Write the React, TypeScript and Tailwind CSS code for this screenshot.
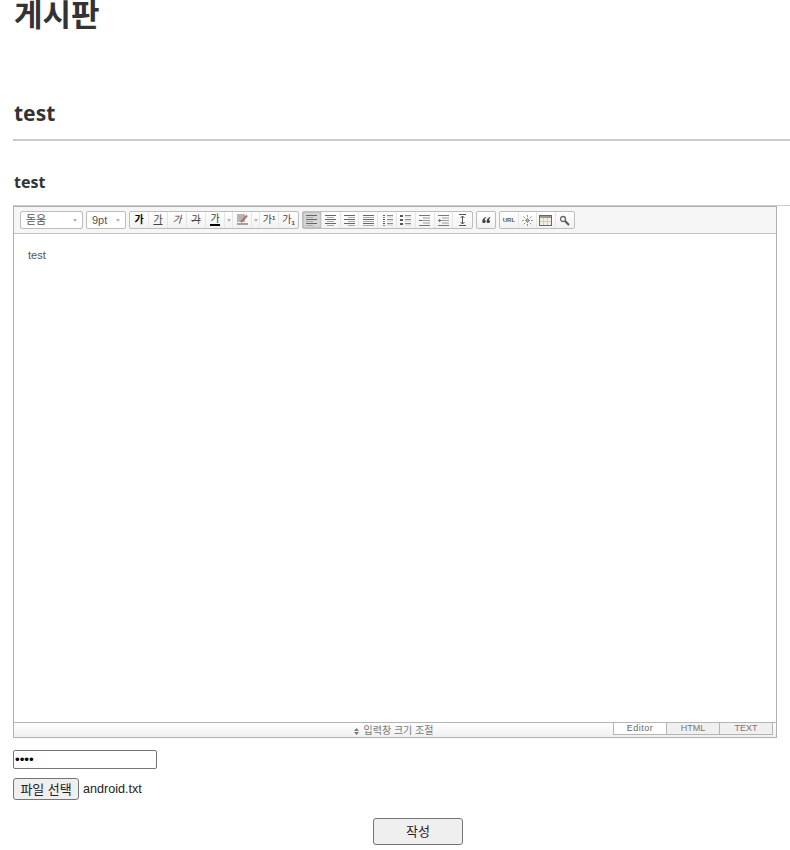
import React from "react";

const Btn = ({ children, active, w = 18.8 }: { children?: React.ReactNode; active?: boolean; w?: number }) => (
  <div
    style={{ width: w }}
    className={`h-full flex items-center justify-center border-r border-[#e6e6e6] last:border-r-0 ${active ? "bg-[#d6d6d6] shadow-[inset_0_0_2px_#888]" : ""}`}
  >
    {children}
  </div>
);

const Group = ({ children }: { children: React.ReactNode }) => (
  <div className="flex h-[18px] items-stretch rounded-[2px] border border-[#bdbdbd] bg-gradient-to-b from-white to-[#f2f2f2]">{children}</div>
);

const Ga = ({ className = "", children = "가" }: { className?: string; children?: React.ReactNode }) => (
  <span className={`text-[10px] leading-none text-[#444] ${className}`}>{children}</span>
);

const Arrow = () => (
  <div className="w-[8px] flex items-center justify-center border-r border-[#e6e6e6]">
    <div className="h-0 w-0 border-x-[2.5px] border-t-[3px] border-x-transparent border-t-[#b5b5b5]" />
  </div>
);

const Lines = ({ rows }: { rows: [number, number][] }) => (
  <svg width="13" height="11" viewBox="0 0 13 11">
    {rows.map(([x, w], i) => (
      <rect key={i} x={x} y={i * 2} width={w} height="1" fill={i % 2 ? "#aaa" : "#666"} />
    ))}
  </svg>
);

const ListIcon = ({ num }: { num?: boolean }) => (
  <svg width="13" height="11" viewBox="0 0 13 11">
    {[0, 4, 8].map((y) => (
      <g key={y}>
        <rect x={num ? 2 : 1} y={y} width={num ? 2 : 3} height={num ? 1 : 2} fill="#555" />
        {num && <rect x="2" y={y + 2} width="2" height="1" fill="#888" />}
        <rect x="6" y={y} width="6" height="1" fill="#888" />
        <rect x="6" y={y + 1.500} width="6" height="1" fill="#ccc" />
      </g>
    ))}
  </svg>
);

const Indent = ({ out }: { out?: boolean }) => (
  <svg width="13" height="11" viewBox="0 0 13 11">
    <rect x="1" y="0" width="11" height="1" fill="#777" />
    <rect x="5" y="2.500" width="7" height="1" fill="#999" />
    <rect x="5" y="5" width="7" height="1" fill="#999" />
    <rect x="5" y="7.500" width="7" height="1" fill="#999" />
    <rect x="1" y="10" width="11" height="1" fill="#777" />
    <path d={out ? "M1 5.500h3.500M2.750 3.750v3.500" : "M1 5.500h3.500"} stroke="#4a7a4a" strokeWidth="1" />
  </svg>
);

function Select({ label, w }: { label: string; w: number }) {
  return (
    <div
      style={{ width: w }}
      className="h-[18px] flex items-center justify-between rounded-[2px] border border-[#bdbdbd] bg-white pl-[5px] pr-[5px]"
    >
      <span className="text-[11px] leading-none text-[#555]">{label}</span>
      <div className="h-0 w-0 border-x-[2.5px] border-t-[3px] border-x-transparent border-t-[#b5b5b5]" />
    </div>
  );
}

export default function App() {
  return (
    <div className="w-[790px] h-[850px] overflow-hidden bg-white pl-[13px] text-[#333] font-['Noto_Sans','Noto_Sans_CJK_KR',sans-serif]">
      <h1 className="text-[31px] font-bold leading-[28px] h-[32px] pl-[1px]">게시판</h1>

      <div className="mt-[65px] border-b-2 border-[#ccc] h-[44px]">
        <h2 className="text-[21px] font-bold leading-[32px] pl-[1px]">test</h2>
      </div>

      <div className="mt-[28px] h-[37px]">
        <h3 className="text-[16px] font-bold leading-[26px] pl-[1px]">test</h3>
      </div>
      <div className="relative">
        <div className="absolute left-0 -top-px w-[777px] h-px bg-[#ccc]" />
        <div className="w-[764px] h-[532px] border border-[#b0b0b0] flex flex-col font-['Liberation_Sans','Noto_Sans_CJK_KR',sans-serif]">
          <div className="h-[27px] shrink-0 bg-[#f6f6f6] border-b border-[#c4c4c4] flex items-center pl-[6px]">
            <div className="flex items-center">
              <Select label="돋움" w={63} />
              <div className="w-[3px]" />
              <Select label="9pt" w={40} />
              <div className="w-[3px]" />
              <Group>
                <Btn w={19}><Ga className="font-bold !text-black">가</Ga></Btn>
                <Btn w={19}><Ga className="underline">가</Ga></Btn>
                <Btn w={19}><Ga className="italic">가</Ga></Btn>
                <Btn w={19}><Ga className="line-through">가</Ga></Btn>
                <Btn w={19}><span className="text-[10px] leading-[10px] text-[#333] border-b-2 border-black">가</span></Btn>
                <Arrow />
                <Btn w={19}>
                  <svg width="13" height="12" viewBox="0 0 13 12">
                    <rect x="1" y="0" width="8" height="8" fill="#b5b5b5" />
                    <path d="M11 1.500L5 8" stroke="#b76a6a" strokeWidth="2" />
                    <rect x="1" y="9" width="11" height="2" fill="#b09a9a" />
                  </svg>
                </Btn>
                <Arrow />
                <Btn w={19}><Ga className="text-[9.500px]">가<sup className="text-[6px] font-bold">1</sup></Ga></Btn>
                <Btn w={19}><Ga className="text-[9.500px]">가<sub className="text-[6px] font-bold">1</sub></Ga></Btn>
              </Group>
              <div className="w-[3px]" />
              <Group>
                <Btn active><Lines rows={[[1, 11], [1, 7], [1, 11], [1, 7], [1, 11], [1, 7]]} /></Btn>
                <Btn><Lines rows={[[1, 11], [3, 7], [1, 11], [3, 7], [1, 11], [3, 7]]} /></Btn>
                <Btn><Lines rows={[[1, 11], [5, 7], [1, 11], [5, 7], [1, 11], [5, 7]]} /></Btn>
                <Btn><Lines rows={[[1, 11], [1, 11], [1, 11], [1, 11], [1, 11], [1, 11]]} /></Btn>
                <Btn><ListIcon num /></Btn>
                <Btn><ListIcon /></Btn>
                <Btn><Indent /></Btn>
                <Btn><Indent out /></Btn>
                <Btn>
                  <svg width="11" height="12" viewBox="0 0 11 12">
                    <path d="M2 0.500h7M2 11.500h7M5.500 2v8M3.500 4l2-2 2 2M3.500 8l2 2 2-2" stroke="#555" strokeWidth="1" fill="none" />
                  </svg>
                </Btn>
              </Group>
              <div className="w-[3px]" />
              <Group>
                <Btn w={18}>
                  <svg width="9" height="6" viewBox="0 0 10 7">
                    <path d="M4 0C2 1 0 3 0 5a2 2 0 1 0 3-1.500C3 2.500 3.500 1.500 4.500 1zM9 0C7 1 5 3 5 5a2 2 0 1 0 3-1.500C8 2.500 8.500 1.500 9.500 1z" fill="#444" />
                  </svg>
                </Btn>
              </Group>
              <div className="w-[3px]" />
              <Group>
                <Btn w={18.500}><span className="text-[6px] font-bold leading-none text-[#555]">URL</span></Btn>
                <Btn w={18.500}>
                  <svg width="11" height="11" viewBox="0 0 11 11">
                    <path d="M5.500 0v11M0 5.500h11M1.500 1.500l8 8M9.500 1.500l-8 8" stroke="#998f8f" strokeWidth="1" strokeDasharray="2 1" />
                  </svg>
                </Btn>
                <Btn w={18.500}>
                  <svg width="13" height="11" viewBox="0 0 13 11">
                    <rect x="0.500" y="0.500" width="12" height="10" fill="#f4f0dc" stroke="#666" />
                    <rect x="1" y="1" width="11" height="2" fill="#999" />
                    <path d="M4.500 3v7M8.500 3v7M1 6.500h11" stroke="#ccc" />
                  </svg>
                </Btn>
                <Btn w={18.500}>
                  <svg width="11" height="11" viewBox="0 0 11 11">
                    <circle cx="4" cy="4" r="2.500" fill="#fff" stroke="#666" strokeWidth="1.300" />
                    <path d="M6 6l4 4" stroke="#555" strokeWidth="2" />
                  </svg>
                </Btn>
              </Group>
            </div>
          </div>

          <div className="flex-1 bg-white pl-[14px] pt-[14px]">
            <span className="block text-[11px] leading-[14px] text-[#555]">test</span>
          </div>

          <div className="h-[15px] shrink-0 border-t border-[#b5b5b5] bg-gradient-to-b from-white to-[#f0f0f0] flex">
            <div className="flex-1 flex items-center justify-center pl-[160px] pt-[2px] gap-[5px]">
              <svg width="5" height="7" viewBox="0 0 5 7">
                <path d="M2.500 0L5 3H0zM2.500 7L0 4h5z" fill="#777" />
              </svg>
              <span className="text-[10px] leading-none text-[#777]">입력창 크기 조절</span>
            </div>
            <div className="flex h-[12px] mr-[3px] text-[9px] text-[#777] leading-[11px]">
              <div className="w-[53px] text-center bg-white border-l border-b border-[#b5b5b5] text-[#666] tracking-[0.5px]">Editor</div>
              <div className="w-[53px] text-center bg-[#f0f0f0] border-l border-b border-[#b5b5b5]">HTML</div>
              <div className="w-[54px] text-center bg-[#f0f0f0] border-x border-b border-[#b5b5b5]">TEXT</div>
            </div>
          </div>
        </div>
      </div>

      <input
        type="password"
        defaultValue="test"
        readOnly
        className="block mt-[12px] w-[144px] h-[19px] rounded-[2px] border border-[#767676] bg-white px-[1px] text-[13.330px] leading-none text-black outline-none font-['Liberation_Sans',sans-serif]"
      />

      <div className="mt-[9px] flex items-center h-[22px]">
        <button className="w-[66px] h-[22px] rounded-[3px] border border-[#767676] bg-[#efefef] text-[13px] leading-none text-[#222]">파일 선택</button>
        <span className="ml-[4px] text-[12.600px] text-[#222] font-['Liberation_Sans',sans-serif]">android.txt</span>
      </div>

      <div className="mt-[18px] ml-[360px]">
        <button className="w-[90px] h-[27px] rounded-[3px] border border-[#767676] bg-[#efefef] text-[13px] leading-none text-[#222]">작성</button>
      </div>
    </div>
  );
}
